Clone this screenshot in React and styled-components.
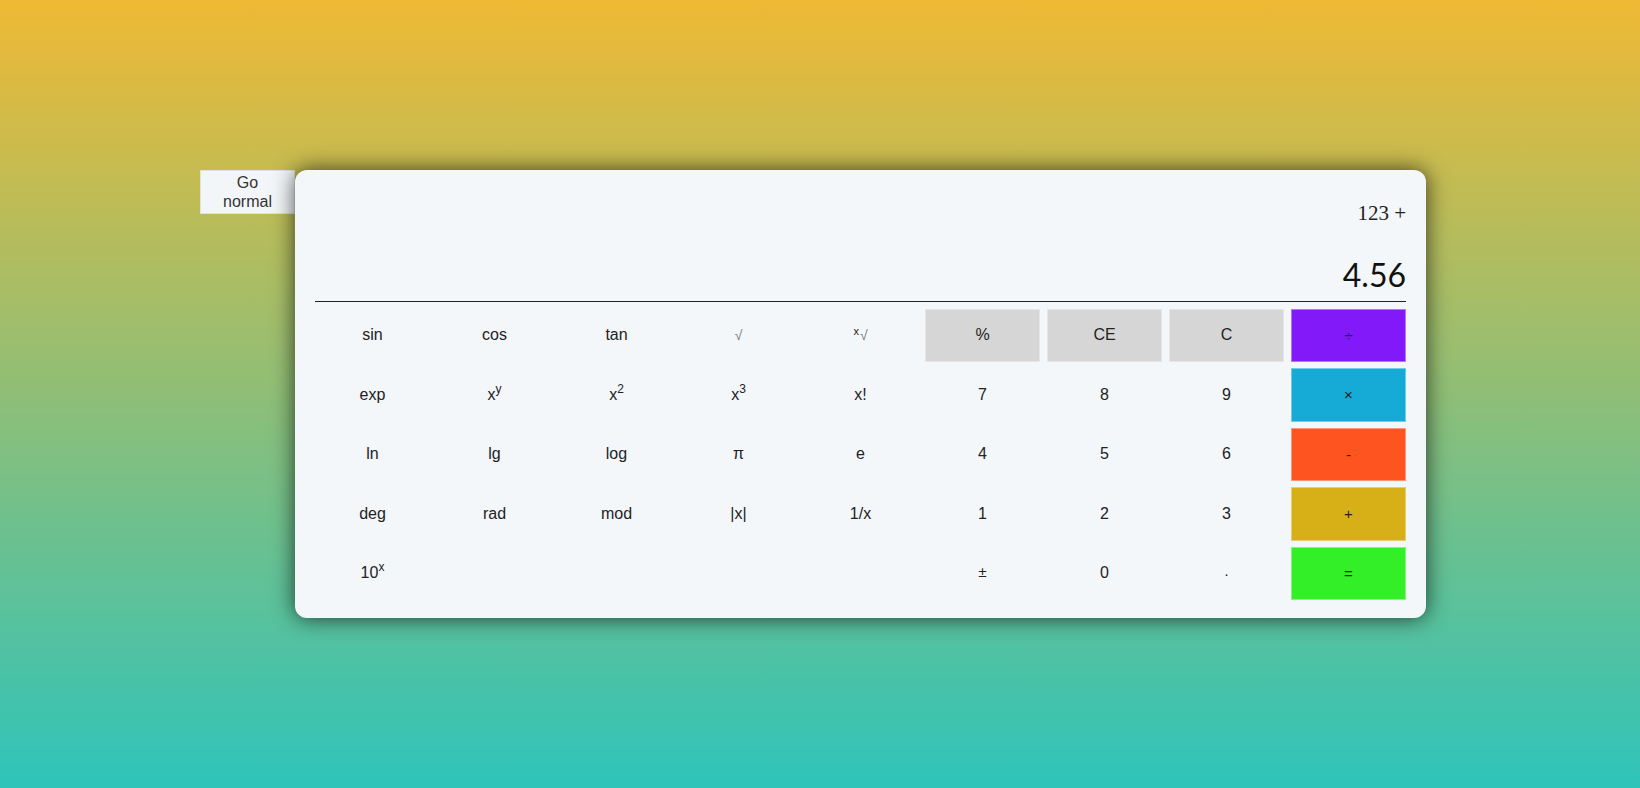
import React from "react";
import styled, { createGlobalStyle } from "styled-components";

const GlobalStyle = createGlobalStyle`
  html, body {
    margin: 0;
    padding: 0;
  }
  body {
    font-family: "Liberation Sans", Arial, sans-serif;
    background: linear-gradient(180deg, #efb934 0%, #2ec4ba 100%);
    min-height: 100vh;
  }
`;

const Page = styled.div`
  min-height: 100vh;
  display: flex;
  align-items: center;
  justify-content: center;
  padding-right: 14px;
  box-sizing: border-box;
`;

const Row = styled.div`
  display: flex;
  align-items: flex-start;
`;

const ModeButton = styled.button`
  width: 95px;
  height: 44px;
  padding: 0;
  margin: 0;
  background: #f3f6f9;
  border: 1px solid #dfe2e5;
  font-family: "Liberation Sans", Arial, sans-serif;
  font-size: 16px;
  line-height: 19px;
  color: #333;
  cursor: pointer;
`;

const Card = styled.div`
  width: 1131px;
  box-sizing: border-box;
  padding: 20px 20px 18px;
  background: #f3f7fa;
  border-radius: 12px;
  box-shadow: 0 0 22px rgba(0, 0, 0, 0.7);
`;

const Display = styled.div`
  height: 112px;
  box-sizing: border-box;
  border-bottom: 1px solid #222;
  display: flex;
  flex-direction: column;
  justify-content: flex-end;
  align-items: flex-end;
  padding-bottom: 6px;
`;

const Previous = styled.div`
  font-family: "Liberation Serif", "Times New Roman", serif;
  font-size: 21px;
  line-height: 24px;
  color: #222;
  margin-bottom: 31px;
`;

const Current = styled.div`
  font-family: Lato, "Liberation Sans", sans-serif;
  font-size: 32px;
  line-height: 38.4px;
  color: #111;
`;

const Keys = styled.div`
  margin-top: 7px;
  display: grid;
  grid-template-columns: repeat(9, 1fr);
  grid-auto-rows: 53.4px;
  column-gap: 7px;
  row-gap: 6.2px;
`;

const tones = {
  plain: "transparent",
  gray: "#d6d6d6",
  purple: "#8119f9",
  blue: "#16aad6",
  orange: "#fd5420",
  gold: "#d6b016",
  green: "#32ef27",
};

const Key = styled.button`
  margin: 0;
  padding: 0;
  background: ${(p) => tones[p.tone]};
  border: 1px solid
    ${(p) =>
      p.tone === "plain"
        ? "transparent"
        : p.tone === "gray"
          ? "#e6e6e6"
          : "rgba(255, 255, 255, 0.4)"};
  font-family: ${(p) =>
    p.mono ? '"Liberation Mono", monospace' : '"Liberation Sans", Arial, sans-serif'};
  font-size: ${(p) => (p.small ? "15px" : "16px")};
  color: #222;
  cursor: pointer;
  display: flex;
  align-items: center;
  justify-content: center;
`;

const Label = styled.span`
  line-height: 1.15;

  sup {
    font-size: 12px;
    line-height: 0;
    vertical-align: 7px;
  }
`;

const Root = styled.span`
  color: #777;
  font-family: "DejaVu Sans", sans-serif;
  font-size: 14px;
  font-weight: 300;
`;

const SmallX = styled.span`
  font-size: 11px;
  position: relative;
  top: -5px;
  margin-right: 1px;
`;

const keys = [
  ["sin"], ["cos"], ["tan"], [<Root>√</Root>],
  [<><SmallX>x</SmallX><Root>√</Root></>],
  ["%", "gray"], ["CE", "gray"], ["C", "gray"], ["÷", "purple", true],
  ["exp"], [<>x<sup>y</sup></>], [<>x<sup>2</sup></>], [<>x<sup>3</sup></>],
  ["x!"], ["7"], ["8"], ["9"], ["×", "blue", true],
  ["ln"], ["lg"], ["log"], ["π"], ["e"], ["4"], ["5"], ["6"], ["-", "orange", true],
  ["deg"], ["rad"], ["mod"], ["|x|"], ["1/x"], ["1"], ["2"], ["3"], ["+", "gold", true],
  [<>10<sup>x</sup></>], [""], [""], [""], [""],
  ["±", "plain", true, true], ["0"], ["·", "plain", true], ["=", "green", true],
];

export default function App() {
  return (
    <>
      <GlobalStyle />
      <Page>
        <Row>
          <ModeButton>
            Go
            <br />
            normal
          </ModeButton>
          <Card>
            <Display>
              <Previous>123 +</Previous>
              <Current>4.56</Current>
            </Display>
            <Keys>
              {keys.map(([label, tone = "plain", small, mono], i) => (
                <Key key={i} tone={tone} small={small} mono={mono}>
                  <Label>{label}</Label>
                </Key>
              ))}
            </Keys>
          </Card>
        </Row>
      </Page>
    </>
  );
}
